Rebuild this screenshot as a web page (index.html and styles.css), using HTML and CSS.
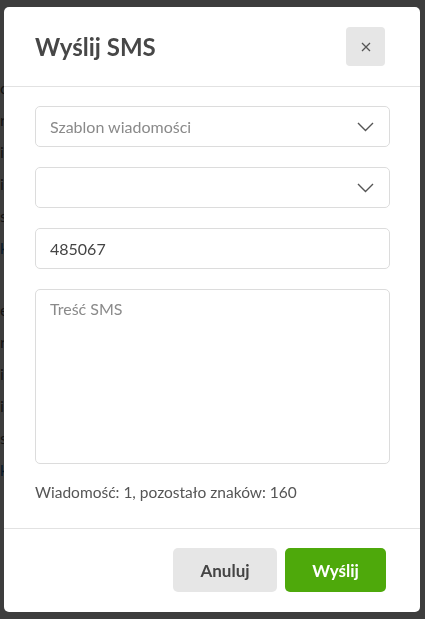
FILE: index.html
```html
<!DOCTYPE html>
<html lang="pl">
<head>
    <meta charset="UTF-8">
    <meta name="viewport" content="width=device-width, initial-scale=1.0">
    <title>Wyślij SMS</title>
    <link rel="stylesheet" href="styles.css">
</head>
<body>

<!-- Strona pod spodem (przykryta nakładką) -->
<div class="page">
    <div class="page-row">ctr</div>
    <div class="page-row">rtio</div>
    <div class="page-row">iati</div>
    <div class="page-row">ia</div>
    <div class="page-row">se</div>
    <div class="page-row link">k</div>
    <div class="page-row">ectr</div>
    <div class="page-row">rtio</div>
    <div class="page-row">iati</div>
    <div class="page-row">ia</div>
    <div class="page-row">se</div>
    <div class="page-row link">k</div>
</div>

<div class="overlay">
    <div class="modal">
        <!-- Nagłówek -->
        <div class="modal-header">
            <h2>Wyślij SMS</h2>
            <button class="close" type="button" aria-label="Zamknij">
                <svg width="10" height="10" viewBox="0 0 10 10">
                    <path d="M1 1 L9 9 M9 1 L1 9" stroke="#555" stroke-width="1.3" fill="none"/>
                </svg>
            </button>
        </div>

        <!-- Formularz -->
        <div class="modal-body">
            <div class="select placeholder">
                <span>Szablon wiadomości</span>
                <svg class="chevron" width="17" height="10" viewBox="0 0 17 10">
                    <path d="M1 1 L8.5 8.5 L16 1" stroke="#555" stroke-width="1.4" fill="none"/>
                </svg>
            </div>
            <div class="select">
                <span></span>
                <svg class="chevron" width="17" height="10" viewBox="0 0 17 10">
                    <path d="M1 1 L8.5 8.5 L16 1" stroke="#555" stroke-width="1.4" fill="none"/>
                </svg>
            </div>
            <input class="field" type="text" value="485067">
            <textarea class="field area" placeholder="Treść SMS"></textarea>
            <p class="counter">Wiadomość: 1, pozostało znaków: 160</p>
        </div>

        <!-- Stopka -->
        <div class="modal-footer">
            <button class="btn btn-cancel" type="button">Anuluj</button>
            <button class="btn btn-send" type="button">Wyślij</button>
        </div>
    </div>
</div>

</body>
</html>
```

FILE: styles.css
```css
* {
    box-sizing: border-box;
}
body {
    margin: 0;
    height: 619px;
    overflow: hidden;
    font-family: Lato, "Open Sans", sans-serif;
    background-color: #fff;
}
.page {
    padding: 78px 0 0 0;
    font-size: 16px;
    color: #555;
}
.page-row {
    height: 32px;
}
.page-row.link {
    color: #1a6fb0;
    height: 62px;
}
.overlay {
    position: fixed;
    inset: 0;
    background-color: rgba(0, 0, 0, 0.76);
}
.modal {
    width: 416px;
    margin: 7px 0 0 4px;
    background-color: #fff;
    border-radius: 5px;
    overflow: hidden;
}
.modal-header {
    display: flex;
    justify-content: space-between;
    align-items: center;
    padding: 20px 35px 20px 31px;
    border-bottom: 1px solid #e2e2e2;
}
.modal-header h2 {
    margin: 0;
    font-size: 24px;
    font-weight: 700;
    color: #474747;
}
.close {
    width: 39px;
    height: 39px;
    border: none;
    border-radius: 4px;
    background-color: #e6e6e6;
    display: flex;
    align-items: center;
    justify-content: center;
    cursor: pointer;
}
.modal-body {
    padding: 19px 30px 27px 31px;
}
.select, .field {
    display: flex;
    align-items: center;
    justify-content: space-between;
    width: 100%;
    height: 41px;
    margin-bottom: 20px;
    padding: 0 14px;
    border: 1px solid #dcdcdc;
    border-radius: 5px;
    font-family: inherit;
    font-size: 16px;
    color: #444;
    background-color: #fff;
}
.select.placeholder span {
    color: #8a8a8a;
}
.chevron {
    margin-right: 1px;
}
.area {
    display: block;
    height: 175px;
    margin-bottom: 19px;
    padding: 9px 14px;
    resize: none;
    line-height: 1.3;
}
.area::placeholder {
    color: #8a8a8a;
}
.counter {
    margin: 0;
    font-size: 15.5px;
    color: #555;
}
.modal-footer {
    display: flex;
    justify-content: flex-end;
    gap: 8px;
    padding: 19px 34px 20px 30px;
    border-top: 1px solid #e2e2e2;
}
.btn {
    height: 44px;
    border: none;
    border-radius: 5px;
    font-family: inherit;
    font-size: 17px;
    font-weight: 700;
    cursor: pointer;
}
.btn-cancel {
    width: 104px;
    background-color: #e6e6e6;
    color: #444;
}
.btn-send {
    width: 101px;
    background-color: #4ea90b;
    color: #fff;
}
```
